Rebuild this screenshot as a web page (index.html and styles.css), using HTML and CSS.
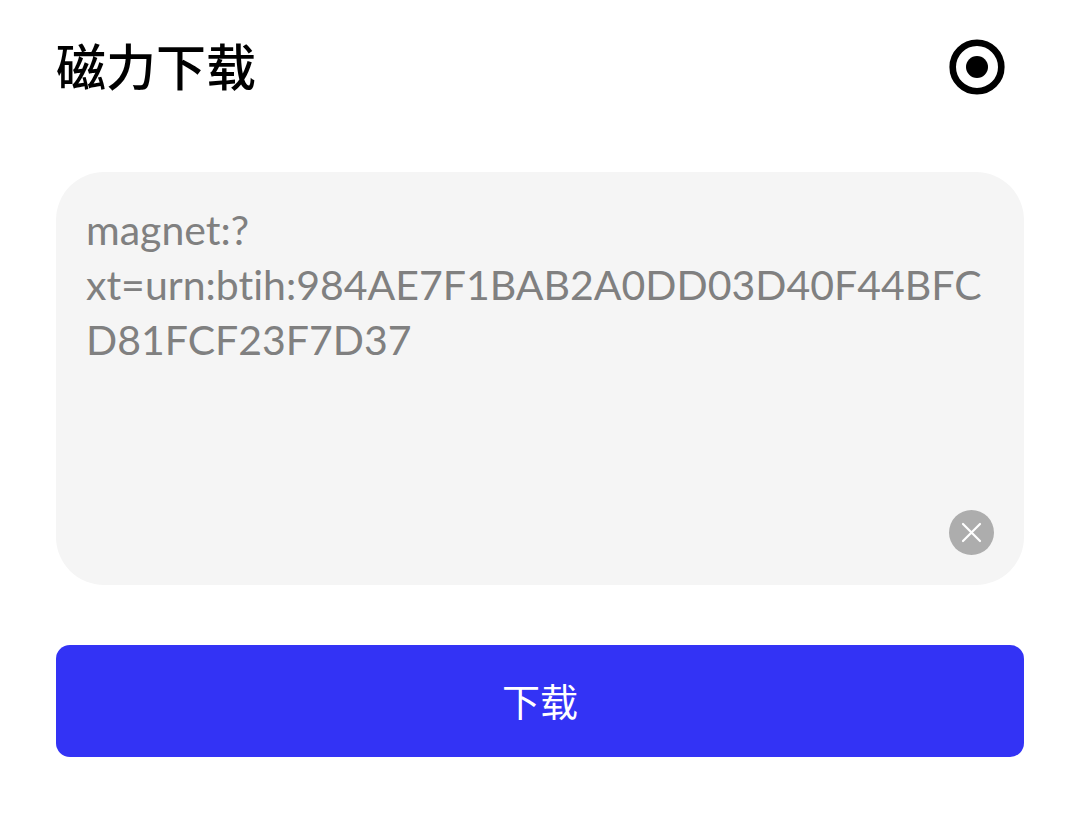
FILE: index.html
```html
<!DOCTYPE html>
<html lang="zh-CN">
<head>
<meta charset="utf-8">
<meta name="viewport" content="width=device-width, initial-scale=1">
<title>磁力下载</title>
<link rel="stylesheet" href="styles.css">
</head>
<body>
<main class="page">
  <header class="header">
    <h1 class="title">磁力下载</h1>
    <button class="target" type="button" aria-label="关闭页面">
      <svg class="target-icon" viewBox="0 0 56 56" aria-hidden="true">
        <circle cx="28" cy="28" r="24.300" fill="none" stroke="#000" stroke-width="6.600"/>
        <circle cx="28" cy="28" r="11" fill="#000"/>
      </svg>
    </button>
  </header>
  <form class="form">
    <div class="field">
      <textarea class="link" aria-label="磁力链接" spellcheck="false">magnet:?
xt=urn:btih:984AE7F1BAB2A0DD03D40F44BFCD81FCF23F7D37</textarea>
      <button class="clear" type="button" aria-label="清空">
        <svg class="clear-icon" viewBox="0 0 45 45" aria-hidden="true">
          <circle cx="22.500" cy="22.500" r="22.500" fill="#adadad"/>
          <path d="M14 14L31 31M31 14L14 31" stroke="#fff" stroke-width="2.200" stroke-linecap="round" fill="none"/>
        </svg>
      </button>
    </div>
    <button class="download" type="button">下载</button>
  </form>
</main>
</body>
</html>
```
FILE: styles.css
```css
* {
  box-sizing: border-box;
}

body {
  margin: 0;
  background: #fff;
  font-family: Lato, "Noto Sans CJK SC", sans-serif;
}

button {
  padding: 0;
  border: 0;
  background: none;
  font: inherit;
  cursor: pointer;
}

.page {
  padding: 32px 56px 62px;
}

.header {
  display: flex;
  align-items: center;
  justify-content: space-between;
  padding-right: 19px;
}

.title {
  margin: 0;
  color: #000;
  font-size: 50px;
  font-weight: 500;
  line-height: 70px;
}

.target-icon {
  display: block;
  width: 56px;
  height: 56px;
}

.form {
  display: flex;
  flex-direction: column;
  gap: 60px;
  margin-top: 70px;
}

.field {
  display: flex;
  flex-direction: column;
  padding: 30px;
  border-radius: 48px;
  background: #f5f5f5;
}

.link {
  display: block;
  width: 100%;
  height: 308px;
  padding: 0;
  border: 0;
  outline: 0;
  resize: none;
  overflow: hidden;
  background: transparent;
  color: #808080;
  font-family: Lato, "Noto Sans CJK SC", sans-serif;
  font-size: 41px;
  font-variant-ligatures: none;
  line-height: 55px;
  word-break: break-all;
}

.clear {
  align-self: flex-end;
}

.clear-icon {
  display: block;
  width: 45px;
  height: 45px;
}

.download {
  padding: 28px;
  border-radius: 14px;
  background: #3333f5;
  color: #fff;
  font-size: 38px;
  line-height: 56px;
}
```
